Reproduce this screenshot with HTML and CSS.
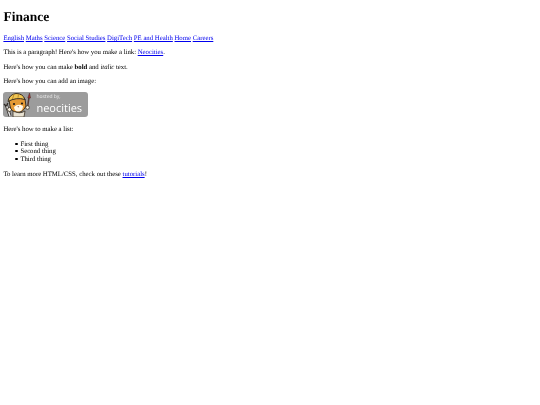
FILE: index.html
```html
<!DOCTYPE html>
<html lang="en">
<head>
    <meta charset="UTF-8">
    <title>Finance</title>
    <link rel="stylesheet" href="styles.css">
</head>
<body>
    <h1>Finance</h1>
    <nav class="subject-links">
        <a href="#">English</a>
        <a href="#">Maths</a>
        <a href="#">Science</a>
        <a href="#">Social Studies</a>
        <a href="#">DigiTech</a>
        <a href="#">PE and Health</a>
        <a href="#">Home</a>
        <a href="#">Careers</a>
    </nav>
    <p>This is a paragraph! Here's how you make a link: <a href="#">Neocities</a>.</p>
    <p>Here's how you can make <strong>bold</strong> and <em>italic</em> text.</p>
    <p>Here's how you can add an image:</p>
    <div class="badge">
        <svg class="badge-cat" viewBox="0 0 32 25" width="32" height="25">
            <!-- wrench -->
            <path d="M3 12 L7 24" stroke="#2f2a26" stroke-width="3"/>
            <path d="M3 12 L7 24" stroke="#e8e8e8" stroke-width="1.4"/>
            <path d="M1 12 L3 14 L5 11" fill="none" stroke="#2f2a26" stroke-width="1.2"/>
            <!-- paw and body -->
            <path d="M10 18 Q16 23 22 19 L21 25 L10 25Z" fill="#e8e2d2" stroke="#3a3024" stroke-width=".8"/>
            <circle cx="6.5" cy="17.5" r="2" fill="#f4efe2" stroke="#3a3024" stroke-width=".8"/>
            <!-- brush -->
            <path d="M24.5 16 L26 5" stroke="#5a3a2e" stroke-width="1.5"/>
            <path d="M24.8 6 L26.5 1 L27.6 6Z" fill="#a8312f" stroke="#4a2a26" stroke-width=".5"/>
            <circle cx="24.5" cy="15.5" r="1.8" fill="#f4efe2" stroke="#3a3024" stroke-width=".7"/>
            <!-- head -->
            <path d="M6 8 Q14 4 22 7 L23 14 Q20 21 14 20 Q8 20 7 14Z" fill="#e59a35" stroke="#3a3024" stroke-width="1"/>
            <path d="M11 15 Q15 11 20 14 Q20 19.5 15 19.5 Q11.5 19.5 11 15Z" fill="#fff8ea"/>
            <circle cx="11" cy="12" r="1.1" fill="#201a16"/>
            <circle cx="19" cy="11.5" r="1.1" fill="#201a16"/>
            <path d="M14.3 14.4 L16.2 14.2 L15.3 15.5Z" fill="#7a3a2a"/>
            <!-- hard hat -->
            <path d="M5 9.5 Q6 2.5 13 1.5 Q20 1.5 22 7.5 Q13 5 5 9.5Z" fill="#f0c654" stroke="#3a3024" stroke-width="1"/>
            <path d="M9.5 7 L11 2 M15 5.7 L15.5 2" stroke="#b98a2c" stroke-width="1"/>
        </svg>
        <div class="badge-text">
            <span class="badge-hosted">hosted by,</span>
            <span class="badge-name">neocities</span>
        </div>
    </div>
    <p>Here's how to make a list:</p>
    <ul>
        <li>First thing</li>
        <li>Second thing</li>
        <li>Third thing</li>
    </ul>
    <p>To learn more HTML/CSS, check out these <a href="#">tutorials</a>!</p>
</body>
</html>
```

FILE: styles.css
```css
body {
    font-family: "Liberation Serif", serif;
    font-size: 6.75px;
    line-height: 7.7px;
    margin: 3.4px;
    color: #000;
    filter: blur(0.2px);
    text-rendering: geometricPrecision;
}
a {
    color: #0000ee;
}
h1 {
    font-size: 13.5px;
    line-height: 16px;
    margin: 5.6px 0 10px;
}
p {
    margin: 6.75px 0;
}
.subject-links {
    margin-bottom: 6.75px;
}
ul {
    list-style: none;
    margin: 6.4px 0 6px;
    padding-left: 17px;
}
li::before {
    content: "";
    display: inline-block;
    width: 2.2px;
    height: 2.2px;
    margin-left: -5px;
    margin-right: 2.8px;
    border-radius: 50%;
    background-color: #000;
    vertical-align: 1px;
}
.badge {
    width: 85px;
    height: 25px;
    margin: -1px 0 9.5px;
    background-color: #9c9c9c;
    border-radius: 3px;
    display: flex;
    align-items: center;
    color: #fff;
}
.badge-cat {
    flex: none;
}
.badge-text {
    display: flex;
    flex-direction: column;
    font-family: "Open Sans", sans-serif;
    margin-top: 2px;
    margin-left: 1px;
}
.badge-hosted {
    font-size: 5px;
    line-height: 7px;
    opacity: 0.8;
}
.badge-name {
    font-size: 11px;
    line-height: 15px;
}
```
